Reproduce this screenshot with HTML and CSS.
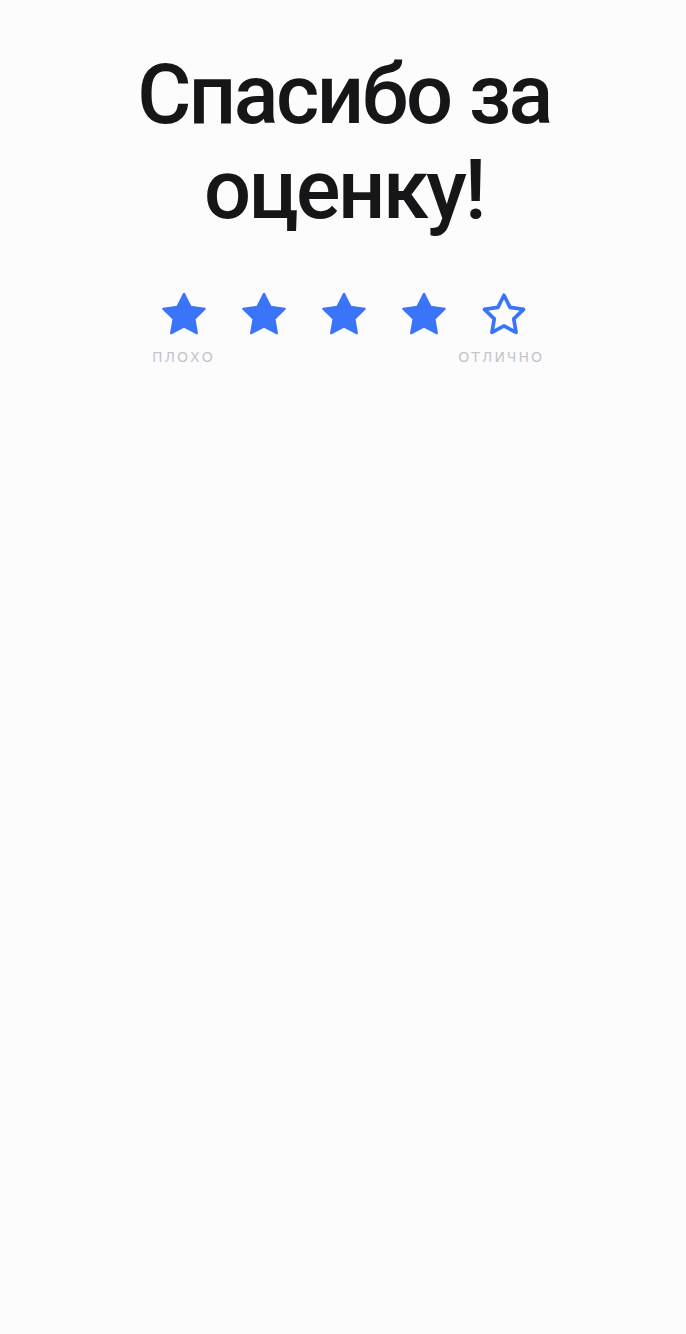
FILE: index.html
```html
<!DOCTYPE html>
<html lang="ru">
<head>
<meta charset="utf-8">
<link rel="stylesheet" href="styles.css">
</head>
<body>
<main class="page">
  <h1 class="title">Спасибо за оценку!</h1>
  <div class="rating">
    <div class="stars">
      <svg class="star" viewBox="0 0 24 24"><path class="fill" d="M12 2.2l3 6 6.6.95-4.8 4.65 1.15 6.6L12 17.3l-5.95 3.1 1.15-6.6-4.8-4.65 6.6-.95z"/></svg>
      <svg class="star" viewBox="0 0 24 24"><path class="fill" d="M12 2.2l3 6 6.6.95-4.8 4.65 1.15 6.6L12 17.3l-5.95 3.1 1.15-6.6-4.8-4.65 6.6-.95z"/></svg>
      <svg class="star" viewBox="0 0 24 24"><path class="fill" d="M12 2.2l3 6 6.6.95-4.8 4.65 1.15 6.6L12 17.3l-5.95 3.1 1.15-6.6-4.8-4.65 6.6-.95z"/></svg>
      <svg class="star" viewBox="0 0 24 24"><path class="fill" d="M12 2.2l3 6 6.6.95-4.8 4.65 1.15 6.6L12 17.3l-5.95 3.1 1.15-6.6-4.8-4.65 6.6-.95z"/></svg>
      <svg class="star" viewBox="0 0 24 24"><path class="outline" d="M12 2.9l2.8 5.6 6.2.9-4.5 4.4 1.06 6.2L12 17.07l-5.56 2.93 1.06-6.2L3 9.4l6.2-.9z"/></svg>
    </div>
    <div class="labels">
      <span class="label">плохо</span>
      <span class="label">отлично</span>
    </div>
  </div>
</main>
</body>
</html>
```
FILE: styles.css
```css
html, body {
  margin: 0;
  padding: 0;
  background: #fcfcfc;
}
.page {
  width: 686px;
  min-height: 1334px;
  display: flex;
  flex-direction: column;
  align-items: center;
  padding-top: 47px;
  box-sizing: border-box;
}
.title {
  margin: 0 0 0 2px;
  width: 440px;
  text-align: center;
  font-family: "Roboto", "DejaVu Sans", sans-serif;
  font-weight: 500;
  font-size: 83px;
  line-height: 95px;
  color: #161618;
  letter-spacing: -2.5px;
}
.rating {
  margin-top: 52px;
  margin-left: 2px;
  width: 400px;
  display: flex;
  flex-direction: column;
  align-items: center;
}
.stars {
  display: flex;
  gap: 28px;
}
.star {
  width: 52px;
  height: 52px;
}
.fill {
  fill: #3a74f8;
  stroke: #3a74f8;
  stroke-width: 1;
  stroke-linejoin: round;
}
.outline {
  fill: none;
  stroke: #3a74f8;
  stroke-width: 1.7;
  stroke-linejoin: round;
}
.labels {
  align-self: stretch;
  display: flex;
  justify-content: space-between;
  padding-left: 8px;
  margin-top: 8px;
}
.label {
  font-family: "DejaVu Sans", sans-serif;
  font-size: 14px;
  letter-spacing: 2px;
  text-transform: uppercase;
  color: #c4c5cd;
}
```
